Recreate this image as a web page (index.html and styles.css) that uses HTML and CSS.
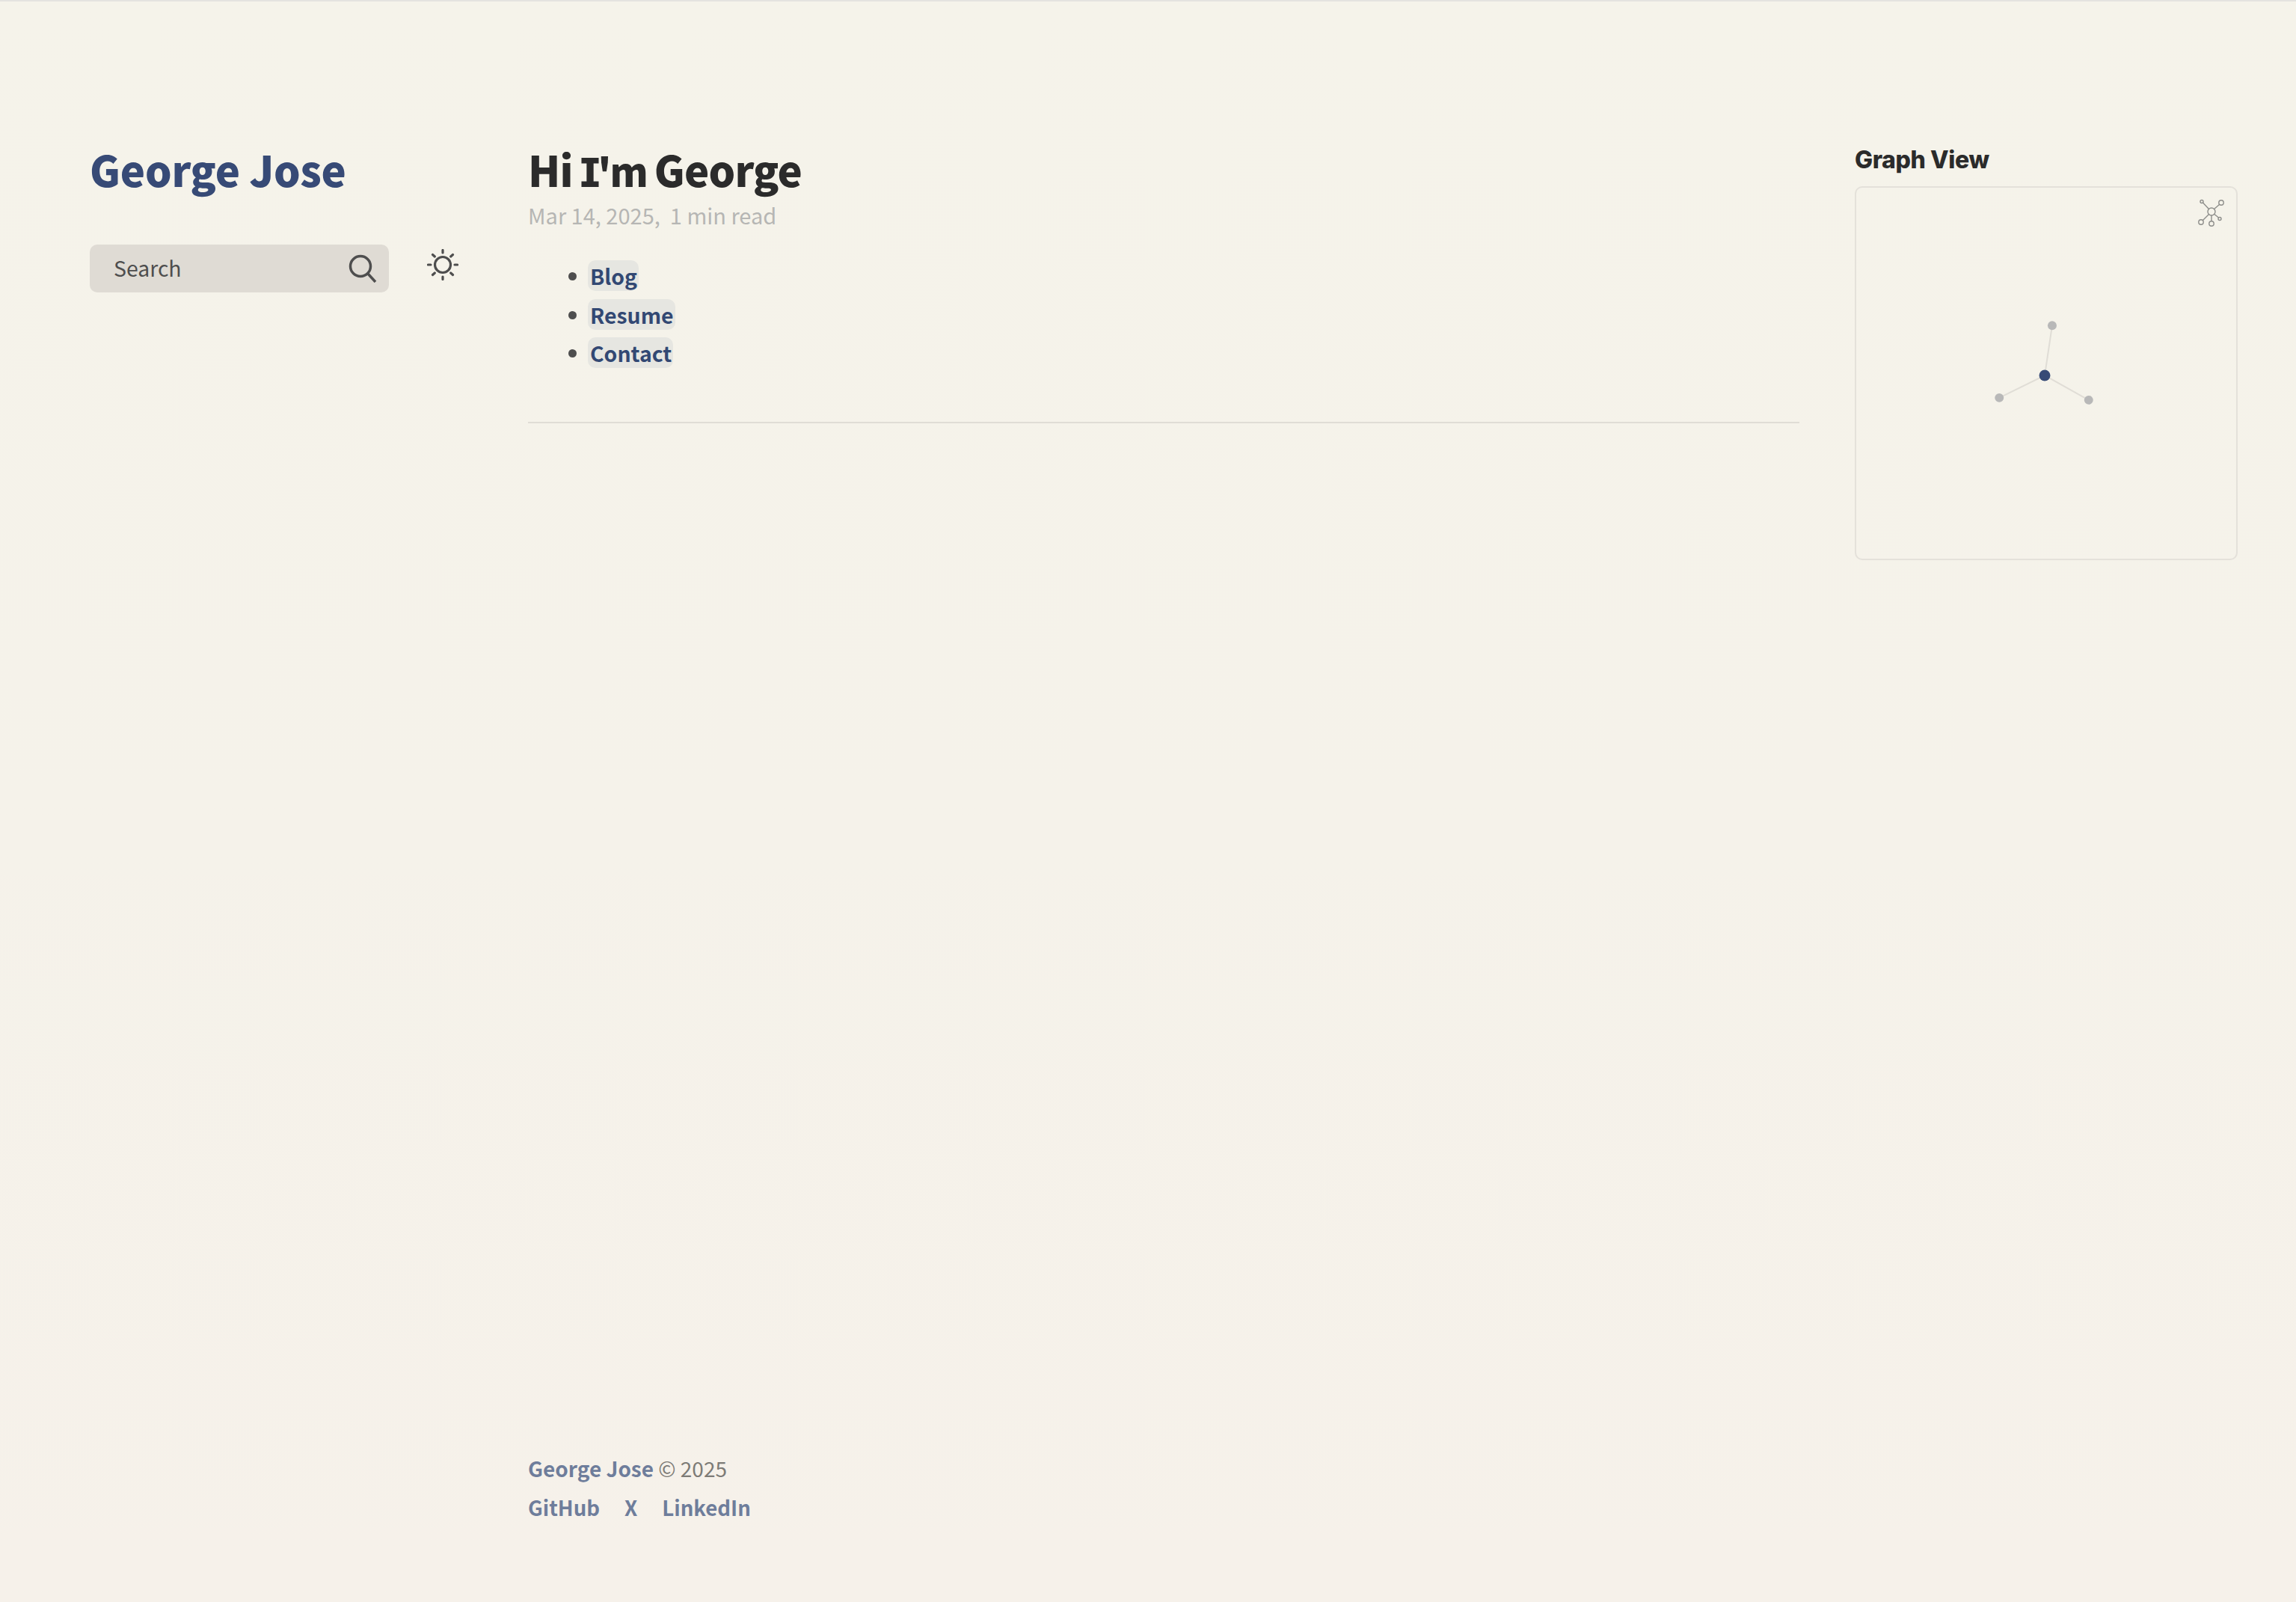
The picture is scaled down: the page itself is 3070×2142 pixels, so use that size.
FILE: index.html
```html
<!DOCTYPE html>
<html lang="en">
<head>
    <meta charset="UTF-8">
    <title>George Jose</title>
    <link rel="stylesheet" href="styles.css">
</head>
<body>
    <div class="page">
        <aside class="left-side">
            <h2 class="page-title"><a href="#">George Jose</a></h2>
            <div class="tools">
                <button class="search-btn" type="button">
                    <span>Search</span>
                    <svg class="search-icon" viewBox="0 0 38 38" width="38" height="38">
                        <circle cx="16" cy="16" r="13.5" />
                        <path d="M26 26 L36 37" />
                    </svg>
                </button>
                <button class="theme-btn" type="button" aria-label="Toggle theme">
                    <svg viewBox="0 0 42 42" width="42" height="42">
                        <circle cx="21" cy="21" r="10.500" />
                        <path d="M21 1.500v3.500M21 37v3.500M1.500 21h3.500M37 21h3.500M7.500 7.500l2.800 2.500M31.700 32l2.800 2.500M7.500 34.500l2.800-2.500M31.700 10l2.800-2.500" />
                    </svg>
                </button>
            </div>
        </aside>

        <main class="center">
            <div class="article">
                <h1 class="article-title">Hi <span class="serif-i">I</span><span class="tight">'m</span> George</h1>
                <p class="meta">Mar 14, 2025, &nbsp;1 min read</p>
                <ul class="link-list">
                    <li><a class="internal" href="#">Blog</a></li>
                    <li><a class="internal" href="#">Resume</a></li>
                    <li><a class="internal" href="#">Contact</a></li>
                </ul>
                <hr class="rule">
            </div>
            <footer class="footer">
                <p><a href="#">George Jose</a> © 2025</p>
                <ul class="footer-links">
                    <li><a href="#">GitHub</a></li>
                    <li><a href="#">X</a></li>
                    <li><a href="#">LinkedIn</a></li>
                </ul>
            </footer>
        </main>

        <aside class="right-side">
            <h3 class="graph-title">Graph View</h3>
            <div class="graph-box">
                <svg class="graph" viewBox="0 0 510 498">
                    <g class="edges">
                        <line x1="253" y1="252" x2="263" y2="185" />
                        <line x1="253" y1="252" x2="192" y2="282" />
                        <line x1="253" y1="252" x2="312" y2="285" />
                    </g>
                    <circle class="node" cx="263" cy="185" r="6" />
                    <circle class="node" cx="192" cy="282" r="6" />
                    <circle class="node" cx="312" cy="285" r="6" />
                    <circle class="node-current" cx="253" cy="252" r="7.500" />
                </svg>
                <svg class="global-icon" viewBox="0 0 38 38" width="38" height="38">
                    <circle cx="19" cy="18" r="5" />
                    <circle cx="32" cy="6" r="3.200" />
                    <circle cx="6" cy="4.500" r="2" />
                    <circle cx="5" cy="32" r="3.200" />
                    <circle cx="19" cy="34" r="3.200" />
                    <circle cx="30" cy="27.500" r="2" />
                    <path d="M15.500 14.500L7.500 6M22.500 14.500L29.500 8.500M15.500 21.500L7.500 29.500M19 23v8M23 21.500l5.500 4.500" />
                </svg>
            </div>
        </aside>
    </div>
</body>
</html>
```

FILE: styles.css
```css
* {
    box-sizing: border-box;
}

html, body {
    margin: 0;
    height: 100%;
}

body {
    background: linear-gradient(#f5f3ea, #f5f2ea 50%, #f6f1ea);
    color: #4e4e4e;
    font-family: "Noto Sans CJK SC", "Noto Sans", sans-serif;
    font-size: 28.400px;
    line-height: 51.500px;
}

a {
    text-decoration: none;
}

.page {
    display: grid;
    grid-template-columns: 586px 1700px 512px;
    height: 2142px;
    padding: 0 0 0 120px;
    border-top: 2px solid #e4e3e0;
}

.left-side {
    padding-top: 192px;
}

.page-title {
    margin: 0;
    font-size: 56px;
    line-height: 64px;
    font-weight: 900;
    letter-spacing: -0.200px;
}

.page-title a {
    color: #374a76;
}

.tools {
    display: flex;
    align-items: flex-start;
    margin-top: 69px;
}

.search-btn {
    display: flex;
    align-items: center;
    justify-content: space-between;
    width: 400px;
    height: 64px;
    padding: 0 16px 0 32px;
    border: none;
    border-radius: 10px;
    background: #dfdbd4;
    color: #4e4e4e;
    font: inherit;
}

.search-btn span {
    margin-top: -3px;
}

.search-icon {
    fill: none;
    stroke: #4e4e4e;
    stroke-width: 3.500;
}

.theme-btn {
    margin: 6px 0 0 51px;
    padding: 0;
    border: none;
    background: none;
    width: 42px;
    height: 42px;
}

.theme-btn svg {
    fill: none;
    stroke: #4e4e4e;
    stroke-width: 3.200;
    stroke-linecap: round;
}

.center {
    display: flex;
    flex-direction: column;
    justify-content: space-between;
    padding-top: 192px;
    padding-bottom: 101px;
}

.article-title {
    margin: 0;
    color: #2b2b2b;
    font-size: 56px;
    line-height: 64px;
    font-weight: 900;
    letter-spacing: -0.800px;
    word-spacing: -2px;
}

.tight {
    font-size: 52px;
    letter-spacing: -2px;
}

.serif-i {
    font-family: Inter, sans-serif;
    font-size: 54px;
    font-weight: 800;
    font-feature-settings: "cv08";
    letter-spacing: -3px;
}

.meta {
    margin: -2px 0 0;
    color: #b6b6b4;
    font-size: 29px;
    line-height: 52px;
}

.link-list {
    margin: 30px 0 0;
    padding: 0 0 0 83px;
}

.link-list li {
    height: 51.500px;
}

.link-list li::marker {
    color: #4e4e4e;
}

.internal {
    margin-left: -3px;
    padding: 0 2px 0 3px;
    border-radius: 10px;
    background: #e6e6e1;
    color: #324873;
    font-weight: 600;
}

.rule {
    height: 2px;
    margin: 66px 0 0;
    border: none;
    background: #e0ddd6;
}

.footer {
    color: #7d7b76;
    font-size: 28px;
}

.footer p {
    margin: 0;
}

.footer a {
    color: #6e7d9b;
    font-weight: 600;
}

.footer-links {
    display: flex;
    gap: 33px;
    margin: 0;
    padding: 0;
    font-size: 27.600px;
    list-style: none;
}

.right-side {
    padding-top: 190px;
    margin-left: 74px;
    width: 512px;
    box-sizing: content-box;
}

.graph-title {
    margin: 0;
    color: #2b2b2b;
    font-family: Inter, "Liberation Sans", sans-serif;
    font-size: 32px;
    line-height: 44px;
    font-weight: 800;
    letter-spacing: -0.400px;
}

.graph-box {
    position: relative;
    height: 500px;
    margin-top: 13px;
    border: 2px solid #e4e1da;
    border-radius: 10px;
}

.graph {
    display: block;
    width: 100%;
    height: 100%;
}

.edges line {
    stroke: #e0ddd6;
    stroke-width: 2;
}

.node {
    fill: #b8b8b8;
}

.node-current {
    fill: #374a76;
}

.global-icon {
    position: absolute;
    top: 14px;
    right: 14px;
    fill: none;
    stroke: #8d8d8a;
    stroke-width: 1.400;
}
```
